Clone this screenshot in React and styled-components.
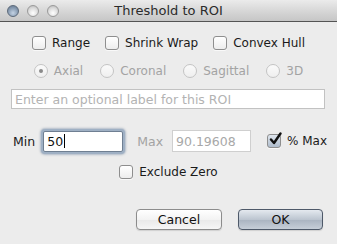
import React from "react";
import styled, { createGlobalStyle } from "styled-components";

const Global = createGlobalStyle`
  html, body { margin: 0; padding: 0; background: #ececec; }
  body { font-family: "DejaVu Sans", "Liberation Sans", sans-serif; font-size: 12px; color: #1a1a1a; }
`;

const Window = styled.div`
  width: 337px;
  height: 244px;
  background: #ececec;
  display: flex;
  flex-direction: column;
  overflow: hidden;
`;

const TitleBar = styled.div`
  height: 21px;
  border-bottom: 1px solid #545454;
  background: linear-gradient(#ebebeb, #d4d4d4 60%, #c6c6c6);
  display: flex;
  align-items: center;
  position: relative;
  padding-left: 7px;
  gap: 8px;
`;

const Light = styled.span`
  width: 12px;
  height: 12px;
  border-radius: 50%;
  box-sizing: border-box;
  border: 1px solid ${(p) => (p.$active ? "#5d6a7a" : "#9a9a9a")};
  background: ${(p) =>
    p.$active
      ? "radial-gradient(circle at 50% 70%, #c4d3e4, #8a9db3 55%, #5f738b)"
      : "radial-gradient(circle at 50% 70%, #ffffff, #dcdcdc 55%, #b4b4b4)"};
`;

const Title = styled.div`
  position: absolute;
  left: 0;
  right: 0;
  text-align: center;
  font-size: 13px;
  color: #2b2b2b;
  pointer-events: none;
`;

const Row = styled.div`
  display: flex;
  align-items: center;
  justify-content: ${(p) => p.$justify || "center"};
  gap: ${(p) => p.$gap ?? 15}px;
  margin-top: ${(p) => p.$mt || 0}px;
  padding: 0 ${(p) => p.$pr || 0}px 0 ${(p) => p.$pl || 0}px;
  height: ${(p) => p.$h || 16}px;
`;

const Option = styled.label`
  display: flex;
  align-items: center;
  gap: 6px;
  color: ${(p) => (p.$disabled ? "#a3a3a3" : "#1a1a1a")};
  white-space: nowrap;
`;

const Box = styled.span`
  width: 14px;
  height: 14px;
  box-sizing: border-box;
  border-radius: 3px;
  border: 1px solid #8e8e8e;
  background: ${(p) =>
    p.$checked
      ? "linear-gradient(#dfe6ee, #aebccc)"
      : "linear-gradient(#ffffff, #ededed)"};
  box-shadow: 0 1px 0 rgba(255, 255, 255, 0.7);
  position: relative;
  flex: none;
`;

const Radio = styled.span`
  width: 14px;
  height: 14px;
  box-sizing: border-box;
  border-radius: 50%;
  border: 1px solid #c4c4c4;
  background: linear-gradient(#fafafa, #efefef);
  display: flex;
  align-items: center;
  justify-content: center;
  flex: none;
  &::after {
    content: "";
    width: 4px;
    height: 4px;
    border-radius: 50%;
    background: ${(p) => (p.$on ? "#8a8a8a" : "transparent")};
  }
`;

const LabelField = styled.div`
  margin: 10px 12px 0 11px;
  height: 20px;
  box-sizing: border-box;
  border: 1px solid #c2c2c2;
  background: #fff;
  color: #b3b3b3;
  display: flex;
  align-items: center;
  padding-left: 3px;
  font-size: 12.5px;
`;

const FieldLabel = styled.span`
  color: ${(p) => (p.$disabled ? "#a3a3a3" : "#1a1a1a")};
  margin-right: ${(p) => p.$mr || 0}px;
  font-size: 12.5px;
  flex: none;
`;

const NumField = styled.div`
  width: ${(p) => p.$w}px;
  height: ${(p) => p.$h}px;
  flex: none;
  box-sizing: border-box;
  background: #fff;
  display: flex;
  align-items: center;
  padding-left: 3px;
  font-size: 12.5px;
  color: ${(p) => (p.$focus ? "#111" : "#a8a8a8")};
  border: 1px solid ${(p) => (p.$focus ? "#6f7f92" : "#cfcfcf")};
  border-radius: ${(p) => (p.$focus ? 2 : 0)}px;
  box-shadow: ${(p) =>
    p.$focus ? "0 0 0 2px #9fb0c4, 0 0 2px 3px rgba(120,140,165,0.5)" : "none"};
  margin-right: ${(p) => p.$mr || 0}px;
`;

const Caret = styled.span`
  display: inline-block;
  width: 1px;
  height: 14px;
  background: #000;
  margin-left: 1px;
`;

const Button = styled.button`
  width: ${(p) => p.$w}px;
  height: 21px;
  border-radius: 4px;
  font-family: inherit;
  font-size: 12.5px;
  color: #111;
  padding: 0;
  border: 1px solid ${(p) => (p.$primary ? "#4e5969" : "#8c8c8c")};
  background: ${(p) =>
    p.$primary
      ? "linear-gradient(#e4e9ef, #bcc5d0 50%, #a9b3c0 51%, #c6ced8)"
      : "linear-gradient(#ffffff, #f3f3f3 50%, #e9e9e9 51%, #f6f6f6)"};
  box-shadow: 0 1px 1px rgba(0, 0, 0, 0.12);
`;

const Check = () => (
  <svg
    width="15"
    height="15"
    viewBox="0 0 15 15"
    style={{ position: "absolute", left: 0, top: -3 }}
  >
    <path
      d="M3 7.5 L6 11 L12.5 1.5"
      fill="none"
      stroke="#111"
      strokeWidth="2.4"
      strokeLinecap="round"
      strokeLinejoin="round"
    />
  </svg>
);

export default function App() {
  return (
    <Window>
      <Global />
      <TitleBar>
        <Light $active />
        <Light />
        <Light />
        <Title>Threshold to ROI</Title>
      </TitleBar>

      <Row $mt={13}>
        <Option>
          <Box />
          Range
        </Option>
        <Option>
          <Box />
          Shrink Wrap
        </Option>
        <Option>
          <Box />
          Convex Hull
        </Option>
      </Row>

      <Row $mt={12} $gap={17}>
        <Option $disabled>
          <Radio $on />
          Axial
        </Option>
        <Option $disabled>
          <Radio />
          Coronal
        </Option>
        <Option $disabled>
          <Radio />
          Sagittal
        </Option>
        <Option $disabled>
          <Radio />
          3D
        </Option>
      </Row>

      <LabelField>Enter an optional label for this ROI</LabelField>

      <Row $mt={21} $h={22} $justify="flex-start" $gap={0} $pl={13}>
        <FieldLabel $mr={8}>Min</FieldLabel>
        <NumField $focus $w={80} $h={21} $mr={14}>
          50
          <Caret />
        </NumField>
        <FieldLabel $disabled $mr={9}>
          Max
        </FieldLabel>
        <NumField $w={79} $h={22} $mr={16}>
          90.19608
        </NumField>
        <Option>
          <Box $checked>
            <Check />
          </Box>
          % Max
        </Option>
      </Row>

      <Row $mt={12}>
        <Option>
          <Box />
          Exclude Zero
        </Option>
      </Row>

      <Row $mt={29} $h={21} $justify="flex-end" $gap={16} $pr={14}>
        <Button $w={86}>Cancel</Button>
        <Button $primary $w={85}>
          OK
        </Button>
      </Row>
    </Window>
  );
}
